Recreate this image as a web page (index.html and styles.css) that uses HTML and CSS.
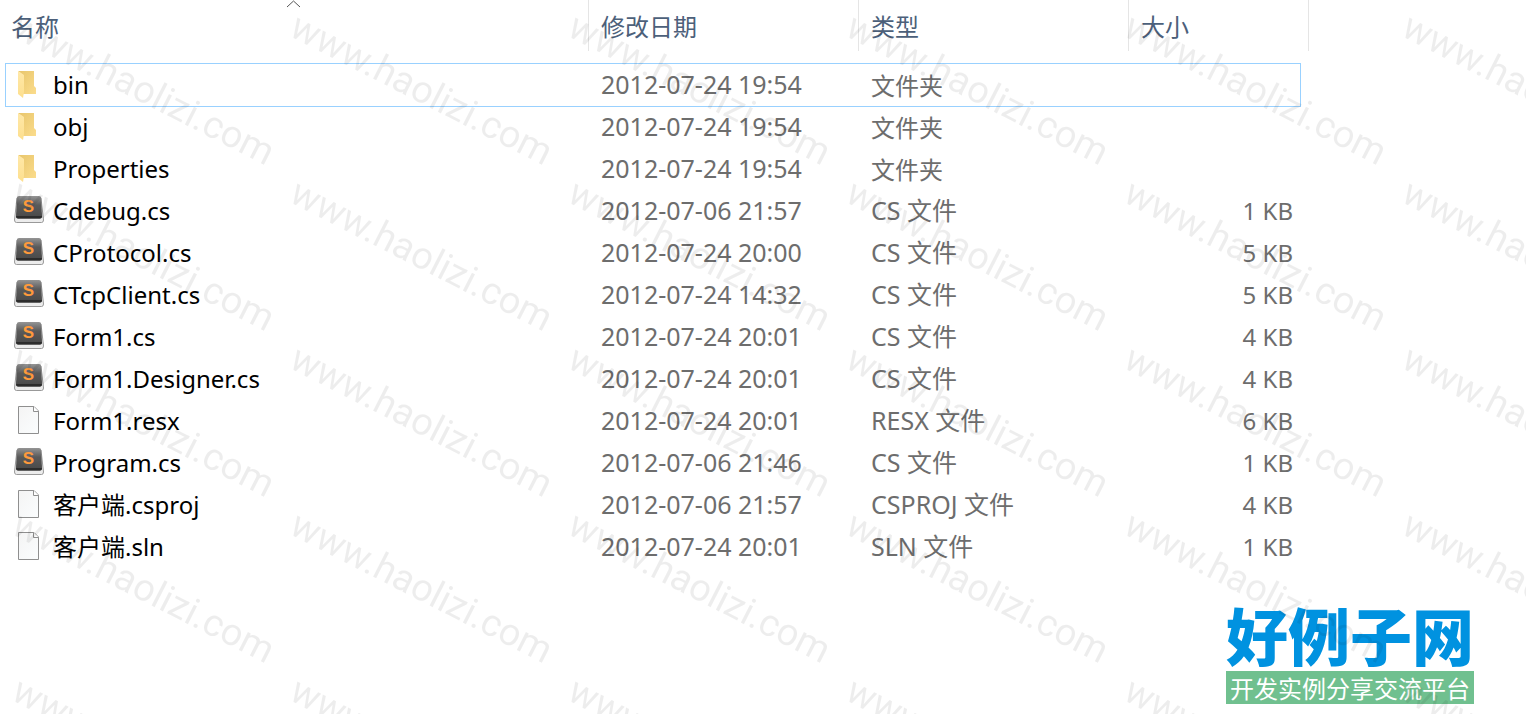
FILE: index.html
```html
<!doctype html>
<html lang="zh-CN">
<head>
    <meta charset="UTF-8">
    <meta name="viewport" content="width=device-width, initial-scale=1">
    <title>客户端</title>
    <link rel="stylesheet" href="styles.css">
</head>
<body>

<!-- 图标 -->
<svg class="sprite" aria-hidden="true">
    <defs>
        <linearGradient id="g-back" x1="0" y1="0" x2="1" y2="1">
            <stop offset="0" stop-color="#e8c66c"/>
            <stop offset="1" stop-color="#fbdc8c"/>
        </linearGradient>
        <linearGradient id="g-front" x1="0" y1="0" x2="0" y2="1">
            <stop offset="0" stop-color="#ffe8a8"/>
            <stop offset="1" stop-color="#fddf8e"/>
        </linearGradient>
        <linearGradient id="g-key" x1="0" y1="0" x2="0" y2="1">
            <stop offset="0" stop-color="#959595"/>
            <stop offset=".4" stop-color="#5a5a5a"/>
            <stop offset="1" stop-color="#484848"/>
        </linearGradient>
        <linearGradient id="g-page" x1="0" y1="0" x2="1" y2="1">
            <stop offset="0" stop-color="#f4f4f4"/>
            <stop offset="1" stop-color="#fbfdfe"/>
        </linearGradient>
    </defs>
    <symbol id="icon-folder" viewBox="0 0 30 30">
        <path d="M4 2H20V17L22 19V25H9V6Z" fill="url(#g-back)"/>
        <path d="M4 2L10 6V23L9 29L4 25Z" fill="url(#g-front)"/>
    </symbol>
    <symbol id="icon-cs" viewBox="0 0 30 30">
        <path d="M3 3L.5 25Q.5 27.500 2.500 27.500H27.500Q29.500 27.500 29.500 25L27 3Z" fill="#ececec" stroke="#999" stroke-width="1"/>
        <path d="M5 1H25Q27 1 27.200 3L28 21Q28 23.500 26 23.500H4Q2 23.500 2 21L2.800 3Q3 1 5 1Z" fill="url(#g-key)"/>
        <path d="M2 21Q2 23.500 4 23.500H26Q28 23.500 28 21Z" fill="#2c2c2c"/>
        <text x="14.500" y="17" text-anchor="middle" class="key-letter">S</text>
    </symbol>
    <symbol id="icon-file" viewBox="0 0 30 30">
        <path d="M4.500 1.500H20L24.500 6V28.500H4.500Z" fill="url(#g-page)" stroke="#8f8f8f"/>
        <path d="M19.500 1.500V6.500H24.500" fill="#fff" stroke="#8f8f8f"/>
    </symbol>
</svg>

<!-- 文件列表 -->
<table class="file-list">
    <colgroup>
        <col class="col-name">
        <col class="col-date">
        <col class="col-type">
        <col class="col-size">
        <col class="col-end">
    </colgroup>
    <thead>
        <tr>
            <th scope="col">
                <span>名称</span>
                <svg class="sort" viewBox="0 0 15 8" aria-hidden="true"><path d="M1 7L7.500 1L14 7" fill="none" stroke="#555"/></svg>
            </th>
            <th scope="col"><span>修改日期</span></th>
            <th scope="col"><span>类型</span></th>
            <th scope="col" colspan="2"><span>大小</span></th>
        </tr>
    </thead>
    <tbody>
        <tr class="focused">
            <td><div class="name"><svg class="icon"><use href="#icon-folder"/></svg>bin</div></td>
            <td>2012-07-24 19:54</td>
            <td class="folder">文件夹</td>
            <td class="size"></td>
        </tr>
        <tr>
            <td><div class="name"><svg class="icon"><use href="#icon-folder"/></svg>obj</div></td>
            <td>2012-07-24 19:54</td>
            <td class="folder">文件夹</td>
            <td class="size"></td>
        </tr>
        <tr>
            <td><div class="name"><svg class="icon"><use href="#icon-folder"/></svg>Properties</div></td>
            <td>2012-07-24 19:54</td>
            <td class="folder">文件夹</td>
            <td class="size"></td>
        </tr>
        <tr>
            <td><div class="name"><svg class="icon"><use href="#icon-cs"/></svg>Cdebug.cs</div></td>
            <td>2012-07-06 21:57</td>
            <td>CS 文件</td>
            <td class="size">1 KB</td>
        </tr>
        <tr>
            <td><div class="name"><svg class="icon"><use href="#icon-cs"/></svg>CProtocol.cs</div></td>
            <td>2012-07-24 20:00</td>
            <td>CS 文件</td>
            <td class="size">5 KB</td>
        </tr>
        <tr>
            <td><div class="name"><svg class="icon"><use href="#icon-cs"/></svg>CTcpClient.cs</div></td>
            <td>2012-07-24 14:32</td>
            <td>CS 文件</td>
            <td class="size">5 KB</td>
        </tr>
        <tr>
            <td><div class="name"><svg class="icon"><use href="#icon-cs"/></svg>Form1.cs</div></td>
            <td>2012-07-24 20:01</td>
            <td>CS 文件</td>
            <td class="size">4 KB</td>
        </tr>
        <tr>
            <td><div class="name"><svg class="icon"><use href="#icon-cs"/></svg>Form1.Designer.cs</div></td>
            <td>2012-07-24 20:01</td>
            <td>CS 文件</td>
            <td class="size">4 KB</td>
        </tr>
        <tr>
            <td><div class="name"><svg class="icon"><use href="#icon-file"/></svg>Form1.resx</div></td>
            <td>2012-07-24 20:01</td>
            <td>RESX 文件</td>
            <td class="size">6 KB</td>
        </tr>
        <tr>
            <td><div class="name"><svg class="icon"><use href="#icon-cs"/></svg>Program.cs</div></td>
            <td>2012-07-06 21:46</td>
            <td>CS 文件</td>
            <td class="size">1 KB</td>
        </tr>
        <tr>
            <td><div class="name"><svg class="icon"><use href="#icon-file"/></svg>客户端.csproj</div></td>
            <td>2012-07-06 21:57</td>
            <td>CSPROJ 文件</td>
            <td class="size">4 KB</td>
        </tr>
        <tr>
            <td><div class="name"><svg class="icon"><use href="#icon-file"/></svg>客户端.sln</div></td>
            <td>2012-07-24 20:01</td>
            <td>SLN 文件</td>
            <td class="size">1 KB</td>
        </tr>
    </tbody>
</table>

<footer class="logo">
    <strong>好例子网</strong>
    <span>开发实例分享交流平台</span>
</footer>

<!-- 水印 -->
<div class="watermark" aria-hidden="true"></div>

<script>
    var watermark = document.querySelector('.watermark');
    // 按窗口大小铺满水印
    var cols = Math.ceil(window.innerWidth / 278);
    var rows = Math.ceil(window.innerHeight / 166);
    watermark.style.gridTemplateColumns = 'repeat(' + cols + ', 278px)';
    for (var i = 0; i < cols * rows; i++) {
        var mark = document.createElement('span');
        mark.textContent = 'www.haolizi.com';
        watermark.appendChild(mark);
    }
</script>
</body>
</html>
```
FILE: styles.css
```css
* {
    margin: 0;
    padding: 0;
    box-sizing: border-box;
}
body {
    display: flex;
    flex-direction: column;
    align-items: flex-start;
    min-height: 100vh;
    background: #fff;
    color: #6d6d6d;
    font-family: "Noto Sans", "Noto Sans CJK SC", sans-serif;
    font-size: 25px;
    line-height: 40px;
}
.sprite {
    position: absolute;
    width: 0;
    height: 0;
}

/*文件列表*/
.file-list {
    margin-left: 5px;
    table-layout: fixed;
    width: 1304px;
    border-collapse: separate;
    border-spacing: 0;
}
.col-name {
    width: 584px;
}
.col-date,
.col-type {
    width: 270px;
}
.col-size {
    width: 172px;
}
.col-end {
    width: 8px;
}
.file-list th {
    position: relative;
    height: 64px;
    vertical-align: top;
    text-align: left;
    font-size: 24px;
    font-weight: normal;
    line-height: 50px;
    color: #4c607a;
}
.file-list th span {
    display: block;
    height: 51px;
    padding-left: 12px;
    padding-top: 2px;
    border-right: 1px solid #e5e5e5;
}
.file-list th:first-child span {
    padding-left: 6px;
}
.sort {
    position: absolute;
    top: 0;
    left: 50%;
    width: 15px;
    height: 8px;
    margin-left: -11px;
}
.file-list td {
    height: 42px;
    padding-left: 12px;
    padding-bottom: 2px;
    white-space: nowrap;
}
.file-list td:first-child {
    padding-left: 8px;
    padding-bottom: 0;
    border-left: 1px solid transparent;
    font-size: 24px;
    color: #000;
}
.file-list .folder {
    padding-top: 2px;
    padding-bottom: 0;
    font-size: 24px;
}
.file-list .size {
    padding-right: 7px;
    padding-bottom: 0;
    border-right: 1px solid transparent;
    font-size: 24px;
    text-align: right;
}
/*选中行的边框*/
.file-list .focused td {
    border-color: #99d1ff;
    box-shadow: 0 -1px #99d1ff, 0 1px #99d1ff;
}
.name {
    display: flex;
    align-items: center;
    gap: 9px;
    height: 42px;
}
.icon {
    width: 30px;
    height: 30px;
    margin-bottom: 2px;
}
.key-letter {
    font: bold 17px "Liberation Sans", sans-serif;
    fill: #ff9a3c;
}

/*右下角标志*/
.logo {
    display: flex;
    flex-direction: column;
    align-self: flex-end;
    margin-top: auto;
    margin-right: 52px;
    margin-bottom: 10px;
    font-family: "Noto Sans CJK SC", sans-serif;
}
.logo strong {
    padding-bottom: 4px;
    font-size: 62px;
    font-weight: 900;
    line-height: 66px;
    color: #0092e0;
}
.logo span {
    background: #70c08f;
    font-size: 24px;
    line-height: 33px;
    text-align: center;
    color: #fff;
}

/*水印*/
.watermark {
    position: fixed;
    top: 0;
    left: 0;
    right: 0;
    bottom: 0;
    display: grid;
    grid-auto-rows: 166px;
    padding-left: 9px;
    overflow: hidden;
    pointer-events: none;
    color: rgba(0, 0, 0, 0.07);
    font-family: Roboto, sans-serif;
    font-size: 38px;
}
.watermark span {
    padding-top: 2px;
    transform: rotate(27deg);
    transform-origin: 0 36px;
    white-space: nowrap;
}
```
